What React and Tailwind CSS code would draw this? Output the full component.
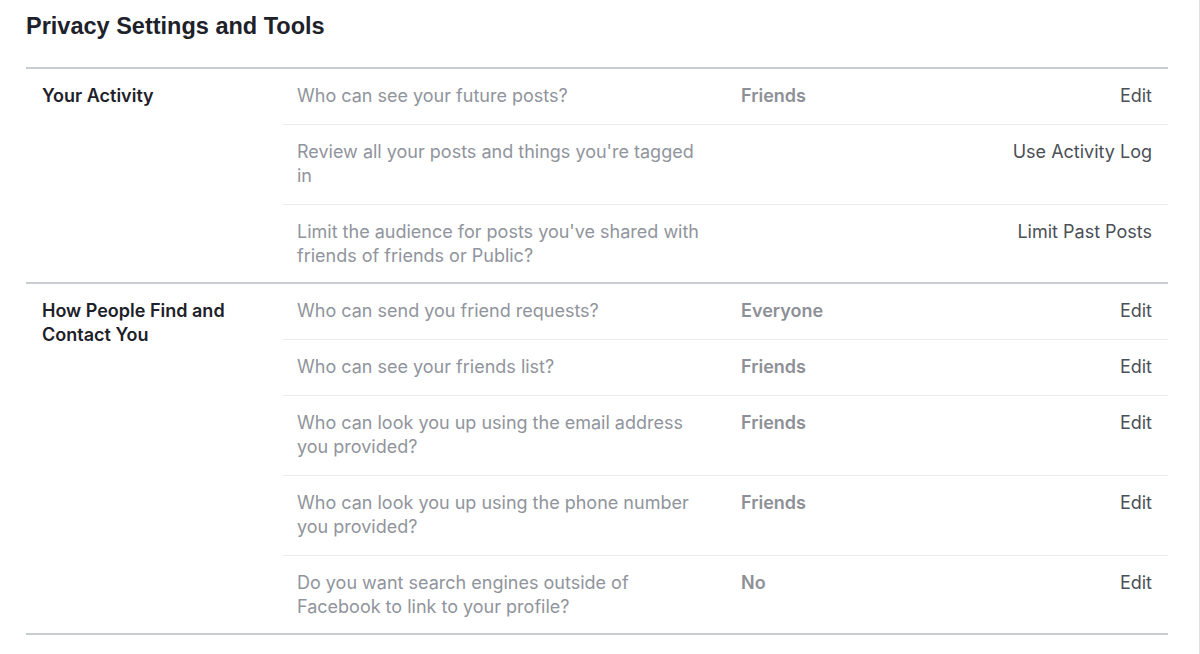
const sections = [
  {
    title: 'Your Activity',
    rows: [
      { q: 'Who can see your future posts?', v: 'Friends', a: 'Edit' },
      { q: "Review all your posts and things you're tagged in", v: '', a: 'Use Activity Log' },
      { q: "Limit the audience for posts you've shared with friends of friends or Public?", v: '', a: 'Limit Past Posts' },
    ],
  },
  {
    title: 'How People Find and Contact You',
    rows: [
      { q: 'Who can send you friend requests?', v: 'Everyone', a: 'Edit' },
      { q: 'Who can see your friends list?', v: 'Friends', a: 'Edit' },
      { q: 'Who can look you up using the email address you provided?', v: 'Friends', a: 'Edit' },
      { q: 'Who can look you up using the phone number you provided?', v: 'Friends', a: 'Edit' },
      { q: 'Do you want search engines outside of Facebook to link to your profile?', v: 'No', a: 'Edit' },
    ],
  },
];

const App = () => {
  return (
    <div className="h-[654px] w-[1200px] overflow-hidden border-r border-[#dddfe2] bg-white pl-[26px] pr-[31px] font-['Inter','Liberation_Sans',Arial,sans-serif]">
      <h1 className="pt-[10px] font-['Liberation_Sans',Arial,sans-serif] text-[23.5px] font-bold leading-[32px] text-[#1d2129]">
        Privacy Settings and Tools
      </h1>

      <div className="mt-[25px] border-t-2 border-[#c9ccd1]">
        {sections.map((section) => (
          <div key={section.title} className="grid grid-cols-[257px_1fr] border-b-2 border-[#c9ccd1]">
            <div className="w-[210px] pl-[16px] pt-[15px] text-[18px] font-semibold leading-[24px] text-[#1d2129]">
              {section.title}
            </div>
            <div>
              {section.rows.map((row, i) => {
                const last = i === section.rows.length - 1;
                return (
                  <div
                    key={row.q}
                    className={`flex pl-[14px] pr-[16px] pt-[15px] text-[18px] leading-[24px] ${
                      last ? 'pb-[14px]' : 'border-b border-[#e9ebee] pb-[16px]'
                    }`}
                  >
                    <div className="w-[444px] shrink-0 pr-[34px] text-[#90949c]">{row.q}</div>
                    <div className="flex-1 font-semibold text-[#8d9096]">{row.v}</div>
                    <div className="text-right text-[#4b4f56]">{row.a}</div>
                  </div>
                );
              })}
            </div>
          </div>
        ))}
      </div>
    </div>
  );
};

export default App;
